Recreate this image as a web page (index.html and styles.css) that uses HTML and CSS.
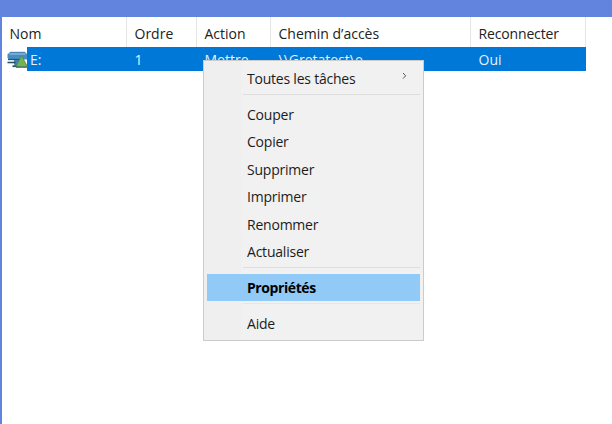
FILE: index.html
```html
<!DOCTYPE html>
<html lang="fr">
<head>
<meta charset="utf-8">
<title>Mappages de lecteurs</title>
<link rel="stylesheet" href="styles.css">
</head>
<body>
<main class="pane">
  <div class="row header">
    <div class="cell"><span>Nom</span></div>
    <div class="cell"><span>Ordre</span></div>
    <div class="cell"><span>Action</span></div>
    <div class="cell"><span>Chemin d’accès</span></div>
    <div class="cell"><span class="tight">Reconnecter</span></div>
  </div>
  <div class="row selected">
    <div class="cell first">
      <svg class="drive" viewBox="0 0 22 18" width="22" height="18">
        <path d="M3 1h15l2 2v5.500H2L.5 7V3.500z" fill="#478dc3"/>
        <path d="M3 1.300h15" stroke="#4b83ac" stroke-width="1"/>
        <path d="M2.500 3h16" stroke="#74b0dc" stroke-width="1.800"/>
        <path d="M1 8.500h13" stroke="#235577" stroke-width="1.300"/>
        <path d="M7 9h9v6H9q-2 0-2-2.500z" fill="#3e82b2"/>
        <path d="M.5 11.500h8" stroke="#284f67" stroke-width="1.600"/>
        <path d="M5.500 15.200h7" stroke="#284f67" stroke-width="1.800"/>
        <path d="M14.500 4.500 20.500 15.700H9z" fill="#74b352" stroke="#4c8447" stroke-width=".8"/>
        <path d="M9 16.200h11" stroke="#34566b" stroke-width="1"/>
      </svg>
      <span>E:</span>
    </div>
    <div class="cell"><span>1</span></div>
    <div class="cell"><span>Mettre...</span></div>
    <div class="cell"><span>\\Gretatest\e</span></div>
    <div class="cell"><span>Oui</span></div>
  </div>
</main>
<nav class="menu">
  <div class="item"><span>Toutes les tâches</span>
    <svg class="arrow" viewBox="0 0 5 8" width="5" height="8"><path d="M1 1l2.700 2.800L1 6.600" fill="none" stroke="#555" stroke-width="1"/></svg>
  </div>
  <div class="sep"></div>
  <div class="item"><span>Couper</span></div>
  <div class="item"><span>Copier</span></div>
  <div class="item"><span>Supprimer</span></div>
  <div class="item"><span>Imprimer</span></div>
  <div class="item"><span>Renommer</span></div>
  <div class="item"><span>Actualiser</span></div>
  <div class="sep short"></div>
  <div class="item active"><span>Propriétés</span></div>
  <div class="sep tall"></div>
  <div class="item"><span>Aide</span></div>
</nav>
</body>
</html>
```
FILE: styles.css
```css
* { box-sizing: border-box; }
body {
  margin: 0;
  width: 612px;
  height: 424px;
  overflow: hidden;
  background: #fff;
  color: #222;
  font: 14px/20px "Open Sans", "Noto Sans", sans-serif;
}
.pane {
  height: 424px;
  border-top: 17px solid #6384de;
  border-left: 2px solid #6384de;
}
.row {
  display: grid;
  grid-template-columns: 125px 70px 74px 200px 115px;
  width: 584px;
}
.cell {
  display: flex;
  align-items: center;
  padding-left: 7.5px;
  white-space: nowrap;
}
.header { height: 30px; }
.header .cell { border-right: 1px solid #e5e5e5; padding-top: 4px; }
.tight { letter-spacing: -0.15px; }
.selected {
  height: 24px;
  color: #e4f1fc;
  background: linear-gradient(90deg, #fff 25px, #0078d7 25px);
}
.selected .cell { padding-top: 1px; }
.selected .first { padding-left: 5px; gap: 1px; }
.drive { flex: none; }
.menu {
  position: absolute;
  left: 203px;
  top: 60px;
  width: 221px;
  height: 281px;
  padding: 4px 3px;
  background: linear-gradient(90deg, #efefef 37px, #f1f1f1 37px);
  border: 1px solid #ccc;
  color: #1c1c1c;
  letter-spacing: -0.22px;
}
.item {
  display: flex;
  align-items: center;
  justify-content: space-between;
  height: 27.5px;
  padding: 0 13px 0 40px;
}
.active {
  background: #91c9f7;
  color: #000;
  font-weight: 700;
  letter-spacing: -0.42px;
  padding-top: 1px;
}
.arrow { margin-top: -5px; }
.sep {
  height: 8.5px;
  margin-left: 36px;
  padding-top: 1.5px;
}
.short { height: 7.5px; padding-top: 1px; }
.tall { height: 9.5px; padding-top: 2px; }
.sep::before {
  content: "";
  display: block;
  height: 1px;
  background: #dedede;
}
.tall::before { background: #e6e6e6; }
```
